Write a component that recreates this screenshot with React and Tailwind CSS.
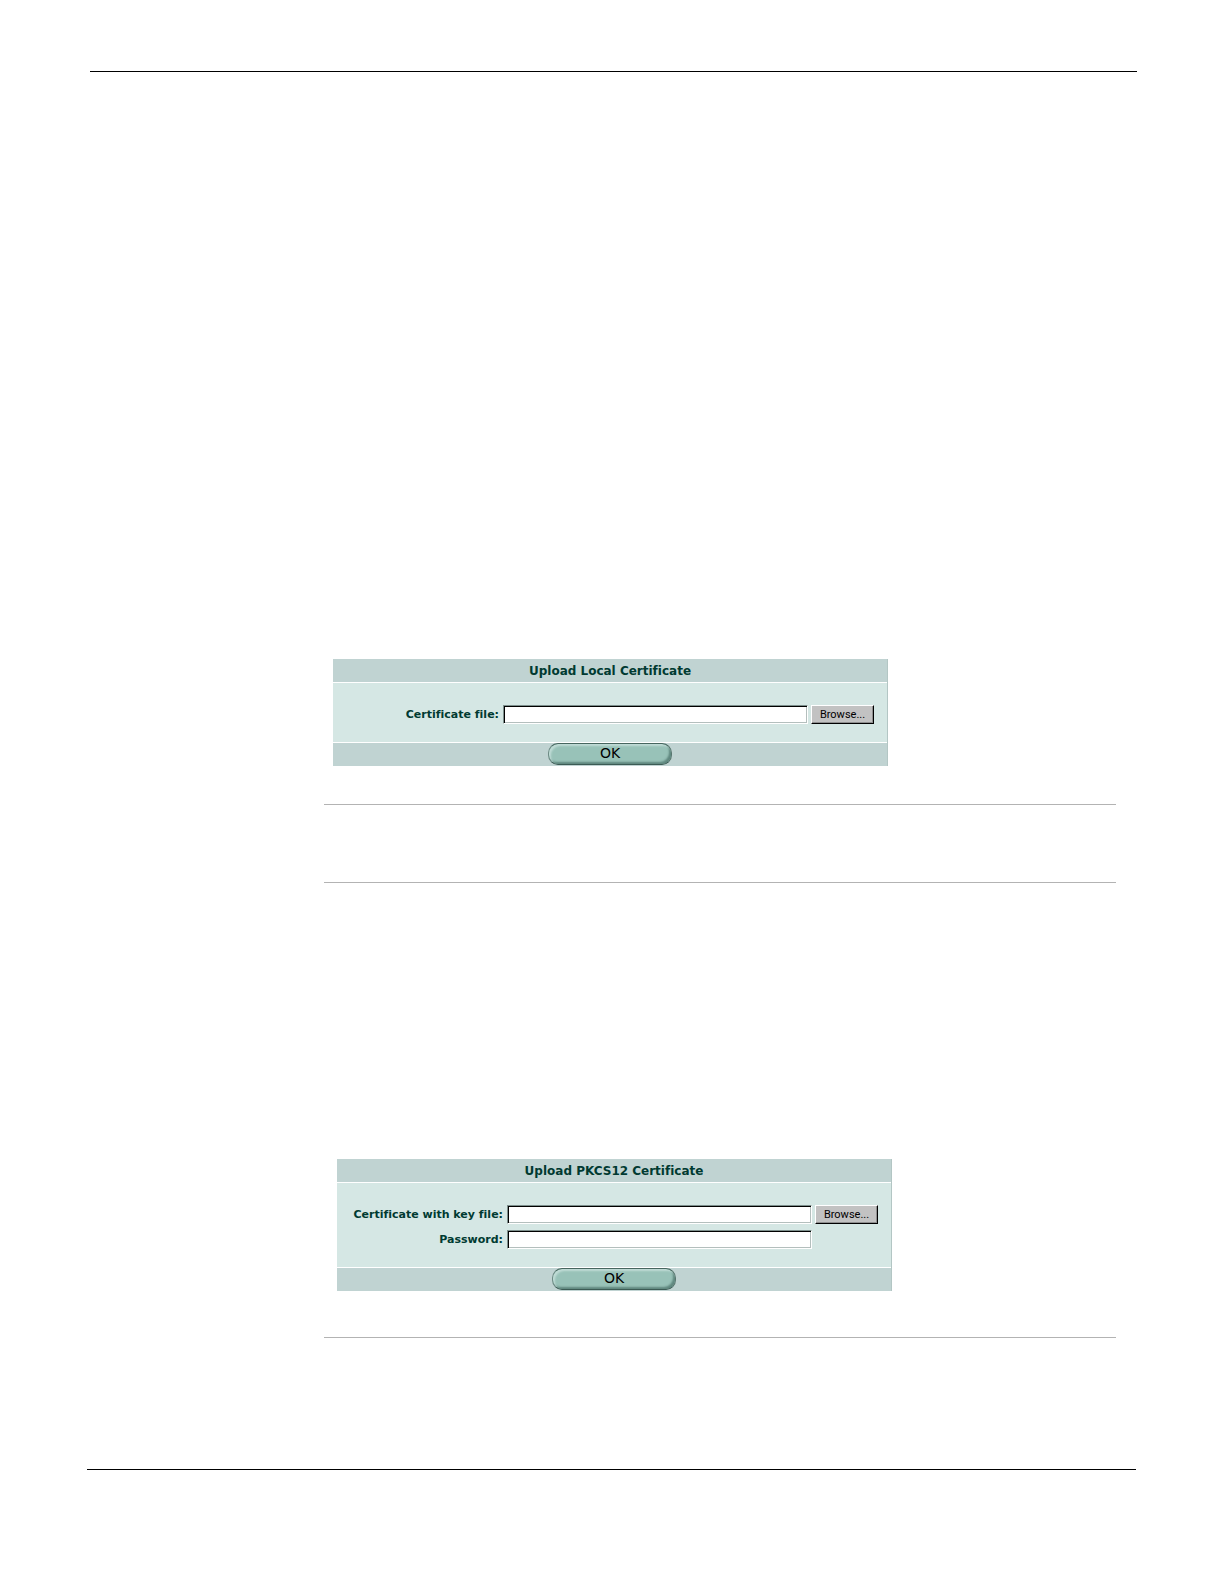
import React from 'react';

const Rule = ({ className = '' }) => (
  <hr className={`border-0 h-px ${className}`} />
);

const TextBox = ({ id, type = 'text' }) => (
  <input
    id={id}
    name={id}
    type={type}
    className="h-[19px] min-w-0 w-[305px] bg-white px-1 font-['Liberation_Sans',sans-serif] text-xs text-black border border-t-[#7d8f8c] border-l-[#7d8f8c] border-r-white border-b-white shadow-[inset_1px_1px_0_#000,inset_-1px_-1px_0_#b4bfbd]"
  />
);

const BrowseButton = () => (
  <button
    type="button"
    className="flex h-[19px] w-[63px] shrink-0 items-center justify-center bg-[#c2c2c2] font-[Roboto,sans-serif] text-[11px] leading-[17px] text-black border border-t-white border-l-white border-r-black border-b-black shadow-[inset_-1px_-1px_0_#8f8f8f] cursor-pointer"
  >
    Browse...
  </button>
);

const UploadPanel = ({ title, fields }) => (
  <form
    onSubmit={(e) => e.preventDefault()}
    className="w-full max-w-[555px] bg-[#d5e7e4] border-r border-[#b3c6c4] font-['DejaVu_Sans',Verdana,sans-serif] [font-variant-ligatures:none] text-[#003a31]"
  >
    {/* Title bar */}
    <h2 className="h-6 bg-[#c0d3d2] border-b border-white text-center text-xs leading-6 font-bold">
      {title}
    </h2>

    {/* Fields */}
    <div className="flex flex-col gap-[6px] pt-[22px] pb-[18px] pr-[13px]">
      {fields.map((field) => (
        <div key={field.id} className="flex items-center gap-[3px]">
          <label htmlFor={field.id} className="flex-1 pr-px text-right text-[11px] leading-4 font-bold">
            {field.label}
          </label>
          <TextBox id={field.id} type={field.type} />
          {field.browse ? <BrowseButton /> : <span className="w-[63px] shrink-0" />}
        </div>
      ))}
    </div>

    {/* Footer */}
    <div className="flex justify-center bg-[#c0d3d2] border-t border-white pb-px">
      <button
        type="submit"
        className="flex h-[22px] w-[124px] items-center justify-center rounded-[10px] border border-t-[#47665f] border-l-[#6d8a84] border-r-[#58766f] border-b-[#3c5b54] bg-[#98c2b8] pb-[2px] shadow-[inset_2px_2px_2px_#bfdbd5,inset_-2px_-2px_2px_#5f877e] text-sm leading-4 text-black cursor-pointer"
      >
        OK
      </button>
    </div>
  </form>
);

const App = () => {
  return (
    <div className="min-h-screen bg-white pt-[71px] pb-[114px]">
      <Rule className="ml-[90px] mr-[87px] bg-black" />

      <main className="pl-[324px] pr-[108px] pt-[587px]">
        <div className="pl-[9px]">
          <UploadPanel
            title="Upload Local Certificate"
            fields={[{ id: 'local-file', label: 'Certificate file:', browse: true }]}
          />
        </div>

        <Rule className="mt-[38px] bg-[#b3b3b3]" />
        <Rule className="mt-[77px] bg-[#b3b3b3]" />

        <div className="pl-[13px] pt-[276px]">
          <UploadPanel
            title="Upload PKCS12 Certificate"
            fields={[
              { id: 'pkcs-file', label: 'Certificate with key file:', browse: true },
              { id: 'pkcs-password', label: 'Password:', type: 'password' },
            ]}
          />
        </div>

        <Rule className="mt-[46px] bg-[#b3b3b3]" />
      </main>

      <Rule className="ml-[87px] mr-[88px] mt-[131px] bg-black" />
    </div>
  );
};

export default App;
